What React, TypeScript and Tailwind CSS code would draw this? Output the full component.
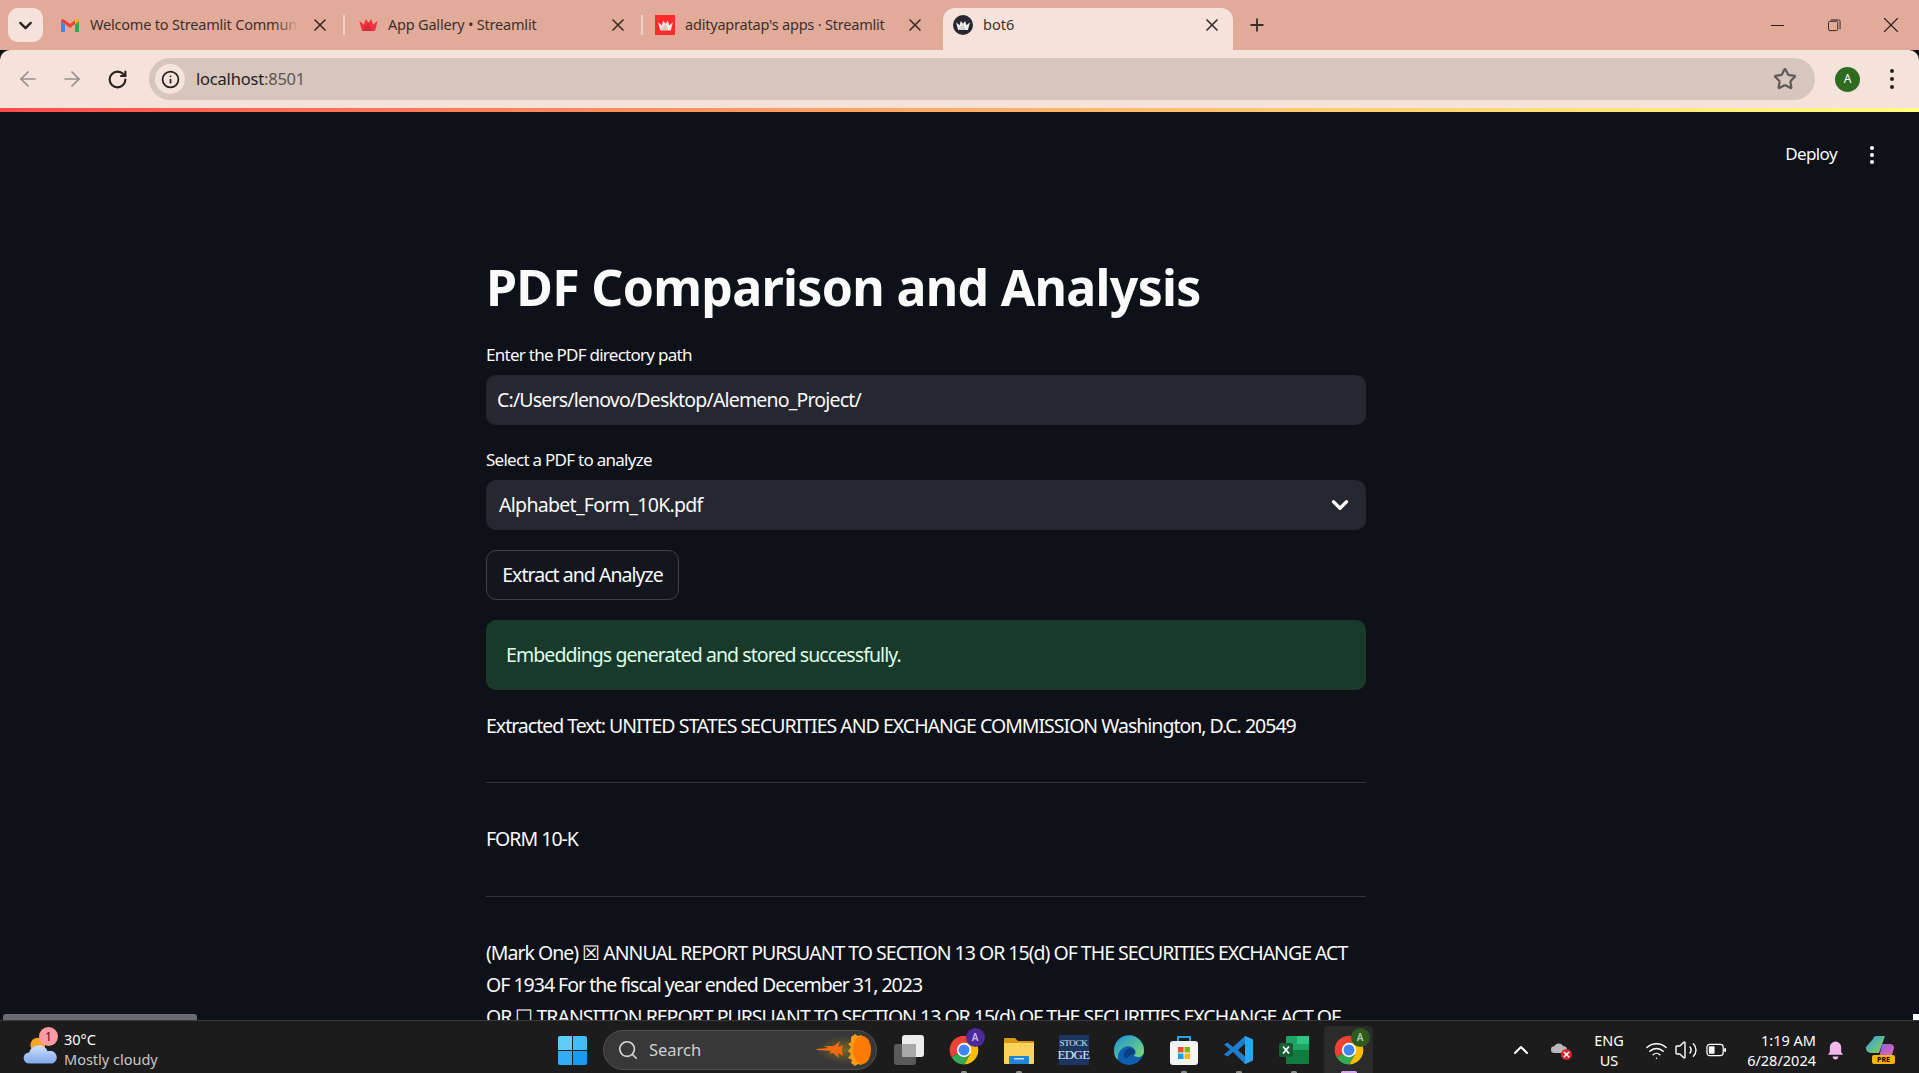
import { ArrowLeft, ArrowRight, ChevronDown, ChevronUp, Info, Plus, RotateCw, Search, Star, Volume2, Wifi, X } from 'lucide-react'

function Crown({ fill = '#f5333f', className = 'h-[12px] w-[19px]' }: { fill?: string; className?: string }) {
  return (
    <svg viewBox="0 0 20 13" className={className}>
      <path d="M0 2l5 4 2-6 3 4 3-4 2 6 5-4-3 11H3z" fill={fill} />
      <path d="M10 4l4 9H3z" fill="#000" fillOpacity="0.13" />
    </svg>
  )
}

function Gmail() {
  return (
    <svg viewBox="0 0 18 13" className="h-[13px] w-[18px]">
      <path d="M0 13V2l4 3v8z" fill="#4285f4" />
      <path d="M18 13V2l-4 3v8z" fill="#34a853" />
      <path d="M0 2a2 2 0 0 1 3-1.6L9 5l6-4.6A2 2 0 0 1 18 2l-4 3-5 4-5-4z" fill="#ea4335" />
      <path d="M14 5l4-3a2 2 0 0 0-3-1.6l-1 .8z" fill="#fbbc04" />
    </svg>
  )
}

function Tab({ icon, title, w, fade }: { icon: React.ReactNode; title: string; w: string; fade?: boolean }) {
  return (
    <div className={`flex h-full items-center ${w} pl-[14px] pr-[13px]`}>
      <div className="flex w-[29px] shrink-0 items-center">{icon}</div>
      <div className={`relative flex-1 overflow-hidden whitespace-nowrap text-[14.5px] tracking-[-0.2px] text-[#3d302c] ${fade ? 'mr-[11px]' : ''}`}>
        {title}
        {fade && <span className="absolute inset-y-0 right-0 w-[24px] bg-gradient-to-r from-transparent to-[#e2ab99]" />}
      </div>
      <X className="shrink-0 text-[#3a2c28]" size={20} strokeWidth={2} />
    </div>
  )
}

function ChromeIcon({ badge, dark }: { badge: string; dark?: boolean }) {
  return (
    <div className="relative h-[30px] w-[30px]">
      <svg viewBox="0 0 48 48" className="h-[30px] w-[30px]">
        <path d="M24 1A23 23 0 0 1 43.9 12.5H24L14 30 4.1 35.5A23 23 0 0 1 24 1z" fill="#ea4335" />
        <path d="M43.9 12.5A23 23 0 0 1 24 47L34 30 24 12.5z" fill="#fbbc04" />
        <path d="M24 47A23 23 0 0 1 4.1 35.5L14 30 24 36 34 30z" fill="#34a853" />
        <circle cx="24" cy="24" r="11.5" fill="#fff" />
        <circle cx="24" cy="24" r="8.8" fill="#4285f4" />
      </svg>
      <span className={`absolute -right-[6px] -top-[7px] flex h-[19px] w-[19px] items-center justify-center rounded-full text-[10px] font-semibold ${dark ? 'bg-[#2f5a1e] text-[#b7c9a8]' : 'bg-[#4b2a9a] text-[#c9b8ee]'}`}>{badge}</span>
    </div>
  )
}

function TaskIcon({ children, dot, active }: { children: React.ReactNode; dot?: boolean; active?: boolean }) {
  return (
    <div className="relative flex h-[48px] w-[55px] items-center justify-center">
      {active && <div className="absolute inset-y-0 left-[3px] w-[49px] rounded-t-[4px] bg-[#2b2b2b]" />}
      <div className="relative">{children}</div>
      {dot && <span className="absolute bottom-0 left-1/2 h-[3px] w-[6px] -translate-x-1/2 rounded-full bg-[#8f8f8f]" />}
      {active && <span className="absolute bottom-0 left-1/2 h-[3px] w-[16px] -translate-x-1/2 rounded-full bg-[#d8a8e8]" />}
    </div>
  )
}

export default function App() {
  return (
    <div className="flex h-[1073px] w-[1919px] flex-col overflow-hidden bg-[#0e1117] font-['Noto_Sans',sans-serif]">
      {/* browser tabs */}
      <div className="flex h-[50px] shrink-0 bg-[#e2ab99]">
        <div className="flex w-[47px] items-start pl-[8px] pt-[8px]">
          <div className="flex h-[34px] w-[35px] items-center justify-center rounded-[10px] bg-[#f5e2db]">
            <ChevronDown size={21} strokeWidth={2.6} className="text-[#2a201d]" />
          </div>
        </div>
        <Tab icon={<Gmail />} title="Welcome to Streamlit Community Cloud" w="w-[296px]" fade />
        <div className="my-[15px] h-[20px] w-[2px] bg-[#f0cfc4]" />
        <Tab icon={<Crown />} title="App Gallery • Streamlit" w="w-[296px]" />
        <div className="my-[15px] h-[20px] w-[2px] bg-[#f0cfc4]" />
        <div className="flex h-full w-[300px] items-center pl-[12px] pr-[18px]">
          <div className="flex h-[20px] w-[30px] shrink-0 items-center">
            <div className="flex h-[20px] w-[20px] items-center justify-center bg-[#ff2b2b]"><Crown fill="#ffe4e0" className="h-[11px] w-[15px]" /></div>
          </div>
          <span className="flex-1 whitespace-nowrap text-[14.5px] tracking-[-0.2px] text-[#3d302c]">adityapratap's apps · Streamlit</span>
          <X className="shrink-0 text-[#3a2c28]" size={20} strokeWidth={2} />
        </div>
        <div className="mt-[8px] flex h-[42px] w-[290px] items-center rounded-t-[12px] bg-[#f5e2db] pb-[8px] pl-[10px] pr-[11px]">
          <div className="flex h-[20px] w-[30px] shrink-0 items-center">
            <div className="flex h-[20px] w-[20px] items-center justify-center rounded-full bg-[#262730]"><Crown fill="#f0f0f0" className="h-[11px] w-[14px]" /></div>
          </div>
          <span className="flex-1 text-[14.5px] text-[#3d302c]">bot6</span>
          <X className="shrink-0 text-[#3a2c28]" size={20} strokeWidth={2} />
        </div>
        <div className="flex w-[48px] items-center justify-center">
          <Plus size={20} strokeWidth={2.2} className="text-[#3a2c28]" />
        </div>
        <div className="ml-auto flex h-full items-center text-[#2a201d]">
          <div className="flex w-[57px] justify-center"><div className="h-[1px] w-[13px] bg-[#2a201d]" /></div>
          <div className="flex w-[57px] justify-center">
            <svg viewBox="0 0 14 14" className="h-[13px] w-[13px]" fill="none" stroke="#2a201d"><rect x="0.5" y="2.5" width="10" height="10" rx="1.5" /><path d="M3 1h8.5A1.5 1.5 0 0 1 13 2.5V11" /></svg>
          </div>
          <div className="flex w-[56px] justify-center"><X size={26} strokeWidth={1} /></div>
        </div>
      </div>

      {/* address bar */}
      <div className="flex h-[58px] shrink-0 items-center rounded-t-[10px] bg-[#f5e2db] pl-[16px] pr-[25px]">
        <ArrowLeft size={24} strokeWidth={1.7} className="text-[#9a8f8b]" />
        <ArrowRight size={24} strokeWidth={1.7} className="ml-[20px] text-[#9a8f8b]" />
        <RotateCw size={21} strokeWidth={2.4} className="ml-[23px] text-[#2a201d]" />
        <div className="ml-[21px] flex h-[42px] flex-1 items-center rounded-full bg-[#d6c6be] pl-[6px]">
          <div className="flex h-[30px] w-[30px] items-center justify-center rounded-full bg-[#f5e2db]">
            <Info size={19} strokeWidth={2.2} className="text-[#2a201d]" />
          </div>
          <span className="ml-[11px] text-[16.5px] tracking-[-0.2px] text-[#2a201d]">localhost<span className="text-[#5e5552]">:8501</span></span>
          <Star size={24} strokeWidth={2.2} className="ml-auto mr-[18px] text-[#5f5a58]" />
        </div>
        <div className="ml-[20px] flex h-[25px] w-[25px] items-center justify-center rounded-full bg-[#2f6b1e] text-[12px] text-white">A</div>
        <div className="ml-[30px] flex flex-col gap-[4px]">
          <span className="h-[4px] w-[4px] rounded-full bg-[#2a201d]" />
          <span className="h-[4px] w-[4px] rounded-full bg-[#2a201d]" />
          <span className="h-[4px] w-[4px] rounded-full bg-[#2a201d]" />
        </div>
      </div>

      {/* streamlit decoration line */}
      <div className="h-[4px] shrink-0 bg-gradient-to-r from-[#ff4b4b] to-[#fffd80]" />

      {/* page */}
      <main className="relative min-h-0 flex-1 overflow-hidden bg-[#0e1117] text-[#fafafa]">
        <div className="flex h-[84px] items-start justify-end pr-[45px] pt-[32px]">
          <span className="text-[17px] leading-[20px] tracking-[-0.6px]">Deploy</span>
          <div className="ml-[33px] mt-[2px] flex flex-col gap-[3px]">
            <span className="h-[4px] w-[4px] rounded-full bg-white" />
            <span className="h-[4px] w-[4px] rounded-full bg-white" />
            <span className="h-[4px] w-[4px] rounded-full bg-white" />
          </div>
        </div>
        <div className="ml-[486px] w-[880px]">
          <h1 className="mt-[56px] text-[50px] font-bold leading-[70px] tracking-[-0.7px]">PDF Comparison and Analysis</h1>
          <label className="mt-[21px] block text-[17px] leading-[24px] tracking-[-0.73px]">Enter the PDF directory path</label>
          <div className="mt-[8px] flex h-[50px] items-center rounded-[10px] bg-[#262730] pl-[11px] text-[19.5px] tracking-[-0.82px]">C:/Users/lenovo/Desktop/Alemeno_Project/</div>
          <label className="mt-[23px] block text-[17px] leading-[24px] tracking-[-0.73px]">Select a PDF to analyze</label>
          <div className="mt-[8px] flex h-[50px] items-center justify-between rounded-[10px] bg-[#262730] pl-[13px] pr-[13px] text-[19.5px] tracking-[-0.7px]">
            Alphabet_Form_10K.pdf
            <ChevronDown size={26} strokeWidth={3} className="text-[#fafafa]" />
          </div>
          <button className="mt-[20px] flex h-[50px] w-[193px] items-center justify-center rounded-[10px] border border-[#3f4149] bg-[#13161d] text-[19.5px] tracking-[-0.96px]">Extract and Analyze</button>
          <div className="mt-[20px] flex h-[70px] items-center rounded-[10px] bg-[#193a2a] pl-[20px] text-[19.5px] tracking-[-0.92px] text-[#dffde9]">Embeddings generated and stored successfully.</div>
          <div className="text-[19.5px] leading-[32px] tracking-[-1px]">
            <p className="mt-[20px]">Extracted Text: UNITED STATES SECURITIES AND EXCHANGE COMMISSION Washington, D.C. 20549</p>
            <hr className="mt-[40px] border-[#33353b]" />
            <p className="mt-[40px]">FORM 10-K</p>
            <hr className="mt-[41px] border-[#33353b]" />
            <p className="mt-[40px]">(Mark One) ☒ ANNUAL REPORT PURSUANT TO SECTION 13 OR 15(d) OF THE SECURITIES EXCHANGE ACT OF 1934 For the fiscal year ended December 31, 2023</p>
            <p className="whitespace-nowrap">OR ☐ TRANSITION REPORT PURSUANT TO SECTION 13 OR 15(d) OF THE SECURITIES EXCHANGE ACT OF</p>
          </div>
        </div>
        <div className="absolute bottom-0 left-[3px] h-[6px] w-[194px] rounded-t-[3px] bg-[#6a6b6e]" />
        <div className="absolute bottom-0 right-0 h-[6px] w-[6px] bg-white" />
      </main>

      {/* windows taskbar */}
      <footer className="flex h-[53px] shrink-0 items-center border-t border-[#3a3a3a] bg-[#1c1c1c] pt-[6px] text-white">
        <div className="flex w-[558px] items-center pl-[24px]">
          <div className="relative h-[32px] w-[40px]">
            <svg viewBox="0 0 30 24" className="absolute -left-[1px] top-[1px] h-[30px] w-[37px]">
              <defs>
                <linearGradient id="cloud" x1="0" y1="0" x2="0" y2="1"><stop offset="0" stopColor="#cfe0fa" /><stop offset="1" stopColor="#7fa8ec" /></linearGradient>
              </defs>
              <circle cx="12" cy="8" r="6" fill="#f5a623" />
              <path d="M5 23a4.5 4.5 0 0 1 0-9 8 8 0 0 1 15-1 5 5 0 0 1 4 10z" fill="url(#cloud)" />
            </svg>
            <span className="absolute left-[15px] top-[-7px] flex h-[19px] w-[19px] items-center justify-center rounded-full bg-[#ff9aa5] text-[12px] text-[#3a1b20]">1</span>
          </div>
          <div className="-mt-[2px] text-[14.5px] leading-[20px]">
            <div>30°C</div>
            <div className="text-[#c8c8c8]">Mostly cloudy</div>
          </div>
        </div>
        <div className="grid h-[29px] w-[29px] grid-cols-2 gap-[1px]">
          <span className="rounded-tl-[2px] bg-[#5fcdf8]" /><span className="rounded-tr-[2px] bg-[#45bcf6]" />
          <span className="rounded-bl-[2px] bg-[#33adf3]" /><span className="rounded-br-[2px] bg-[#1a9af0]" />
        </div>
        <div className="ml-[16px] flex h-[40px] w-[274px] items-center rounded-full border border-[#505050] bg-[#383838] pl-[13px] pr-[3px]">
          <Search size={22} strokeWidth={1.8} className="text-[#d8d8d8]" />
          <span className="ml-[10px] text-[16.5px] text-[#cfcfcf]">Search</span>
          <svg viewBox="0 0 58 34" className="ml-auto h-[34px] w-[58px]">
            <defs>
              <radialGradient id="glow"><stop offset="0" stopColor="#8a7a20" stopOpacity="0.7" /><stop offset="1" stopColor="#8a7a20" stopOpacity="0" /></radialGradient>
            </defs>
            <ellipse cx="30" cy="17" rx="28" ry="14" fill="url(#glow)" />
            <path d="M1 16l12-1 -4-2 10 0 6-5-2 6 5-2-1 5 1 6-5-3 1 5-6-5-4 1 2-3-14-1z" fill="#f26a12" />
            <path d="M36 4l4-3 3 2 3-1 8 6v18l-8 6-3-1-3 2-4-3 1-3-4-2 3-4-3-3 3-4-3-3 3-2z" fill="#f59a1a" />
            <ellipse cx="47" cy="17" rx="9" ry="14" fill="#ff7a00" />
          </svg>
        </div>
        <div className="ml-[4px] flex items-center">
          <TaskIcon>
            <svg viewBox="0 0 30 30" className="h-[30px] w-[30px]"><rect x="0" y="9" width="22" height="21" rx="3" fill="#5a5a5a" /><rect x="8" y="0" width="22" height="22" rx="3" fill="#ececec" /><rect x="8" y="9" width="14" height="13" rx="1" fill="#a8a8a8" /></svg>
          </TaskIcon>
          <TaskIcon dot><ChromeIcon badge="A" /></TaskIcon>
          <TaskIcon dot>
            <svg viewBox="0 0 30 30" className="h-[30px] w-[30px]"><path d="M0 4a1 1 0 0 1 1-1h10l3 3h15a1 1 0 0 1 1 1v3H0z" fill="#d69a12" /><path d="M0 8h30v20a1 1 0 0 1-1 1H1a1 1 0 0 1-1-1z" fill="#fcd35c" /><rect x="5" y="21" width="20" height="8" rx="1" fill="#1f86d6" /><rect x="10" y="23" width="10" height="1.5" fill="#bfe3ff" /></svg>
          </TaskIcon>
          <TaskIcon>
            <div className="flex h-[30px] w-[30px] flex-col items-center justify-center bg-[#1c3561] font-['Liberation_Serif',serif] text-[#dfe7f5]">
              <span className="text-[9px] leading-[10px] tracking-[-0.3px]">STOCK</span>
              <span className="text-[13px] leading-[14px] tracking-[-0.6px]">EDGE</span>
            </div>
          </TaskIcon>
          <TaskIcon>
            <svg viewBox="0 0 30 30" className="h-[30px] w-[30px]">
              <defs>
                <linearGradient id="edgeTop" x1="0" y1="0" x2="1" y2="1"><stop offset="0" stopColor="#1f8fd8" /><stop offset="1" stopColor="#7ee36a" /></linearGradient>
              </defs>
              <circle cx="15" cy="15" r="15" fill="#0f5fb0" />
              <path d="M0 15a15 15 0 0 1 30 1c0 4-3 6-6 6-2 0-4-1-4-2 2-1 2-3 1-5-2-4-8-5-12-2-4 3-6 6-5 12-3-2-4-6-4-10z" fill="url(#edgeTop)" />
              <path d="M10 20c0-5 5-8 9-6 2 1 2 3 1 5-3 1-6 2-8 5-1-1-2-2-2-4z" fill="#0b3f7e" />
            </svg>
          </TaskIcon>
          <TaskIcon dot>
            <svg viewBox="0 0 30 30" className="h-[30px] w-[30px]"><path d="M9 6V2h12v4" fill="none" stroke="#2aa5e8" strokeWidth="2" /><rect x="1" y="6" width="28" height="24" rx="3" fill="#f5f5f5" /><rect x="9" y="12" width="5.5" height="5.5" fill="#f25022" /><rect x="15.5" y="12" width="5.5" height="5.5" fill="#7fba00" /><rect x="9" y="18.5" width="5.5" height="5.5" fill="#00a4ef" /><rect x="15.5" y="18.5" width="5.5" height="5.5" fill="#ffb900" /></svg>
          </TaskIcon>
          <TaskIcon dot>
            <svg viewBox="0 0 30 30" className="h-[30px] w-[30px]"><path d="M21 1l8 3.500v21l-8 3.500-12-12-5.500 4.500-3.500-2 6-5-6-5 3.500-2L9 12z" fill="#1c7fd0" /><path d="M21 8.500l-7 6.500 7 6.500z" fill="#1c1c1c" /><path d="M21 1l8 3.500v21l-8 3.500z" fill="#2aa5f0" /></svg>
          </TaskIcon>
          <TaskIcon dot>
            <svg viewBox="0 0 30 30" className="h-[30px] w-[30px]"><rect x="7" y="1" width="23" height="28" rx="1.500" fill="#21a366" /><rect x="18" y="1" width="12" height="8" fill="#33c481" /><rect x="7" y="15" width="23" height="14" fill="#107c41" /><rect x="0" y="8" width="14" height="14" rx="1.500" fill="#185c37" /><path d="M4 11.500l6 7M10 11.500l-6 7" stroke="#fff" strokeWidth="1.800" /></svg>
          </TaskIcon>
          <TaskIcon active><ChromeIcon badge="A" dark /></TaskIcon>
        </div>

        <div className="ml-auto flex items-center pr-[13px]">
          <div className="flex w-[40px] justify-center"><ChevronUp size={24} strokeWidth={2} /></div>
          <div className="flex w-[40px] justify-center">
            <div className="relative h-[18px] w-[21px]">
              <svg viewBox="0 0 22 16" className="h-[14px] w-[18px]"><path d="M4 14a4 4 0 0 1 0-8 6 6 0 0 1 11 0 4 4 0 0 1 1 8z" fill="#b9b9b9" /></svg>
              <span className="absolute -bottom-[1px] right-0 flex h-[11px] w-[11px] items-center justify-center rounded-full bg-[#d9232e]"><X size={9} strokeWidth={4} /></span>
            </div>
          </div>
          <div className="w-[56px] text-center text-[14.5px] leading-[20px]">
            <div>ENG</div>
            <div>US</div>
          </div>
          <div className="flex w-[38px] justify-center"><Wifi size={23} strokeWidth={1.5} /></div>
          <div className="flex w-[22px] justify-center"><Volume2 size={24} strokeWidth={1.4} className="shrink-0" /></div>
          <div className="flex w-[38px] justify-center">
            <svg viewBox="0 0 22 14" className="h-[14px] w-[21px]"><rect x="1" y="1" width="17" height="12" rx="3" fill="none" stroke="#fff" strokeWidth="1.300" /><rect x="3" y="3" width="6" height="8" rx="1" fill="#fff" /><rect x="19" y="5" width="2" height="4" rx="1" fill="#fff" /></svg>
          </div>
          <div className="w-[81px] text-right text-[14.5px] leading-[20px]">
            <div>1:19 AM</div>
            <div className="whitespace-nowrap">6/28/2024</div>
          </div>
          <div className="flex w-[38px] justify-center">
            <svg viewBox="0 0 18 20" className="h-[20px] w-[17px]"><path d="M9 1a6 6 0 0 1 6 6v5l2 3H1l2-3V7a6 6 0 0 1 6-6z" fill="#f0b8ec" /><path d="M6 17h6a3 3 0 0 1-6 0z" fill="#f0b8ec" /></svg>
          </div>
          <div className="flex w-[52px] justify-center">
            <div className="relative h-[28px] w-[30px]">
              <svg viewBox="0 0 30 24" className="h-[24px] w-[30px]">
                <defs>
                  <linearGradient id="copL" x1="0" y1="0" x2="1" y2="1"><stop offset="0" stopColor="#2f9fe8" /><stop offset="1" stopColor="#8fd04a" /></linearGradient>
                  <linearGradient id="copR" x1="0" y1="0" x2="1" y2="1"><stop offset="0" stopColor="#8a5be0" /><stop offset="1" stopColor="#f06bb0" /></linearGradient>
                </defs>
                <path d="M8 3a4 4 0 0 1 4-3h8l-6 17H6a5 5 0 0 1-5-6z" fill="url(#copL)" />
                <path d="M17 8h8a4 4 0 0 1 4 4l-2 7a4 4 0 0 1-4 3h-9z" fill="url(#copR)" />
              </svg>
              <span className="absolute bottom-0 left-[7px] flex h-[9px] w-[23px] items-center justify-center rounded-[2px] bg-[#f4b400] text-[7px] font-bold leading-none text-black">PRE</span>
            </div>
          </div>
        </div>
      </footer>
    </div>
  )
}
